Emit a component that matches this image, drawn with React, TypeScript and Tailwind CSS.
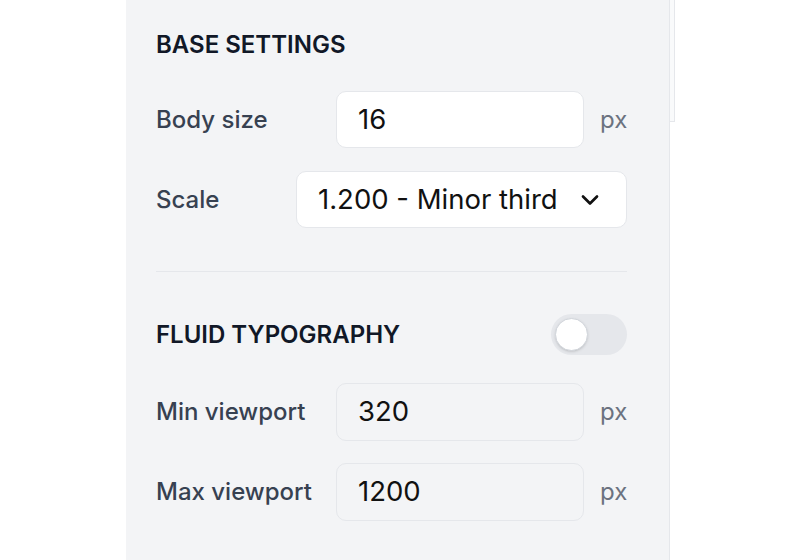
import React from "react";

function TextRow({ label, value, disabled }: { label: string; value: string; disabled?: boolean }) {
  return (
    <div className="flex items-center justify-between">
      <span className="text-[24px] font-medium text-[#374151]">{label}</span>
      <div className="flex items-center gap-[16px]">
        <div
          className={
            disabled
              ? "flex h-[58px] w-[248px] items-center rounded-[10px] border border-[#e5e7eb] bg-[#f3f4f6] pl-[21px] text-[27.5px] text-[#111111]"
              : "flex h-[57px] w-[248px] items-center rounded-[10px] border border-[#e5e7eb] bg-white pl-[21px] text-[27.5px] text-[#111111]"
          }
        >
          {value}
        </div>
        <span className="w-[27px] text-[24px] text-[#6b7280]">px</span>
      </div>
    </div>
  );
}

export default function App() {
  return (
    <div className="flex h-[560px] w-[800px] bg-white font-['Inter',sans-serif]">
      <div className="ml-[126px] flex h-full w-[544px] flex-col border-r border-[#e5e7eb] bg-[#f3f4f6] pl-[30px] pr-[42px] pt-[29px]">
        <h2 className="text-[24px] font-semibold leading-[32px] text-[#111827]">BASE SETTINGS</h2>

        <div className="mt-[30px]">
          <TextRow label="Body size" value="16" />
        </div>

        <div className="mt-[23px] flex items-center justify-between">
          <span className="text-[24px] font-medium text-[#374151]">Scale</span>
          <div className="flex h-[57px] w-[331px] items-center justify-between rounded-[10px] border border-[#e5e7eb] bg-white pl-[21px] pr-[22px] text-[27.5px] text-[#111111]">
            <span>1.200 - Minor third</span>
            <svg width="28" height="28" viewBox="0 0 24 24" fill="none" stroke="#111111" strokeWidth="2.3" strokeLinecap="round" strokeLinejoin="round">
              <polyline points="6 9 12 15 18 9" />
            </svg>
          </div>
        </div>

        <div className="mt-[43px] h-px w-full bg-[#e5e7eb]" />

        <div className="mt-[42px] flex items-center justify-between">
          <h2 className="text-[24px] font-semibold leading-[32px] text-[#111827]">FLUID TYPOGRAPHY</h2>
          <div className="flex h-[41px] w-[76px] items-center rounded-full bg-[#e5e7eb] px-[4px]">
            <div className="h-[33px] w-[33px] rounded-full border border-[#d1d5db] bg-white shadow-sm" />
          </div>
        </div>

        <div className="mt-[28px]">
          <TextRow label="Min viewport" value="320" disabled />
        </div>
        <div className="mt-[22px]">
          <TextRow label="Max viewport" value="1200" disabled />
        </div>
      </div>
      <div className="h-[122px] w-[5px] border-b border-r border-[#e5e7eb] bg-[#f9fafb]" />
    </div>
  );
}
